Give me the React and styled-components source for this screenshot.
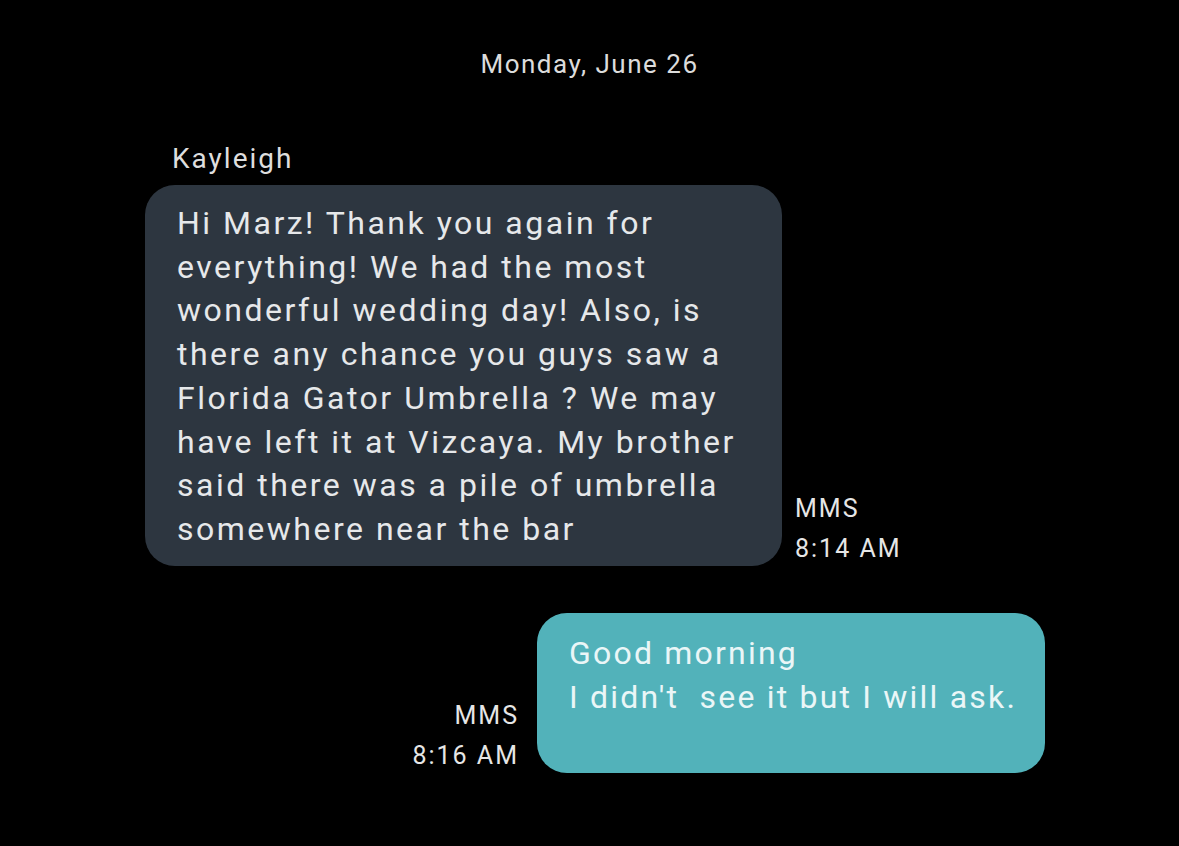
import React from "react";
import styled, { createGlobalStyle } from "styled-components";

const GlobalStyle = createGlobalStyle`
  html, body {
    margin: 0;
    padding: 0;
    background: #000;
  }
  body {
    font-family: Roboto, "Noto Sans", "Liberation Sans", sans-serif;
  }
`;

function App() {
  return (
    <>
      <GlobalStyle />
      <StyledThread>
        <div className="date">Monday, June 26</div>
        <div className="sender">Kayleigh</div>
        <Row>
          <Bubble>
            Hi Marz! Thank you again for
            <br />
            everything! We had the most
            <br />
            wonderful wedding day! Also, is
            <br />
            there any chance you guys saw a
            <br />
            Florida Gator Umbrella ? We may
            <br />
            have left it at Vizcaya. My brother
            <br />
            said there was a pile of umbrella
            <br />
            somewhere near the bar
          </Bubble>
          <Meta>
            MMS
            <br />
            8:14 AM
          </Meta>
        </Row>
        <Row $sent>
          <Meta $sent>
            MMS
            <br />
            8:16 AM
          </Meta>
          <Bubble $sent>
            Good morning
            <br />
            I didn't&nbsp; see it but I will ask.
          </Bubble>
        </Row>
      </StyledThread>
    </>
  );
}

// 대화 화면
const StyledThread = styled.div`
  min-height: 846px;
  box-sizing: border-box;
  padding: 49px 134px 0 145px;
  display: flex;
  flex-direction: column;
  color: #e4e4e4;

  .date {
    text-align: center;
    font-size: 26px;
    line-height: 30px;
    letter-spacing: 1.5px;
    color: #dcdcdc;
    margin-left: -11px;
  }
  .sender {
    font-size: 28px;
    line-height: 32px;
    letter-spacing: 2px;
    margin: 64px 0 10px 27px;
    color: #dedede;
  }
`;

const Row = styled.div`
  display: flex;
  align-items: flex-end;
  justify-content: ${(p) => (p.$sent ? "flex-end" : "flex-start")};
  gap: ${(p) => (p.$sent ? "18px" : "13px")};
  margin-top: ${(p) => (p.$sent ? "47px" : "0")};
`;

const Bubble = styled.div`
  box-sizing: border-box;
  width: ${(p) => (p.$sent ? "508px" : "637px")};
  min-height: ${(p) => (p.$sent ? "160px" : "381px")};
  padding: ${(p) => (p.$sent ? "19px 16px 16px 32px" : "17px 16px 14px 32px")};
  border-radius: 30px;
  background: ${(p) => (p.$sent ? "#52b2ba" : "#2d3640")};
  color: ${(p) => (p.$sent ? "#eaf6f7" : "#e6e8ea")};
  font-size: 32px;
  line-height: 43.7px;
  letter-spacing: ${(p) => (p.$sent ? "2.2px" : "2.5px")};
  white-space: nowrap;
`;

const Meta = styled.div`
  font-size: 25px;
  line-height: 40px;
  letter-spacing: 2px;
  color: #e6e6e6;
  text-align: ${(p) => (p.$sent ? "right" : "left")};
  margin-bottom: -3px;
`;

export default App;
